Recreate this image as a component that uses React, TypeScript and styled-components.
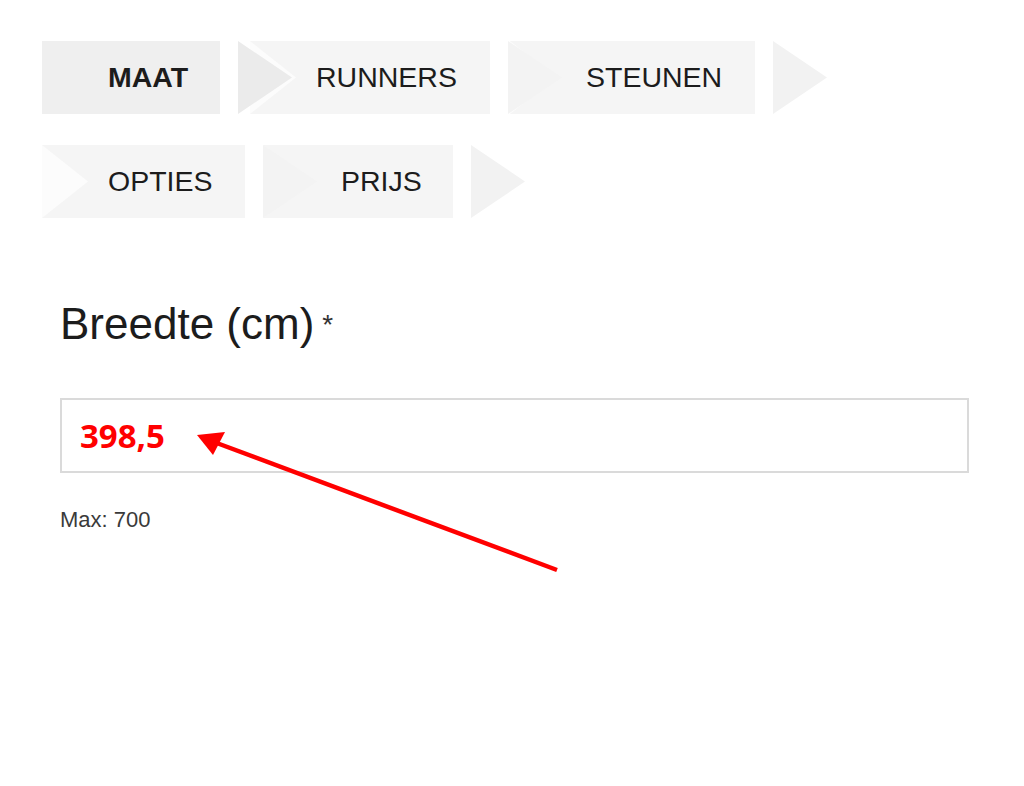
import React from "react";
import styled, { createGlobalStyle } from "styled-components";

const GlobalStyle = createGlobalStyle`
  html, body {
    margin: 0;
    padding: 0;
    background: #ffffff;
    font-family: "Liberation Sans", Arial, sans-serif;
  }
`;

const Page = styled.div`
  position: relative;
  width: 1024px;
  height: 786px;
  padding: 41px 0 0 42px;
  box-sizing: border-box;
  overflow: hidden;
`;

const Steps = styled.ol`
  list-style: none;
  margin: 0;
  padding: 0;
  width: 900px;
  display: flex;
  flex-wrap: wrap;
  row-gap: 31px;
`;

const Step = styled.li<{
  $width: number;
  $padLeft: number;
  $space: number;
  $active?: boolean;
  $notch?: boolean;
  $arrow: string;
}>`
  position: relative;
  box-sizing: border-box;
  width: ${(p) => p.$width}px;
  height: 73px;
  margin-right: ${(p) => p.$space}px;
  padding-left: ${(p) => p.$padLeft}px;
  display: flex;
  align-items: center;
  background: ${(p) => (p.$active ? "#efefef" : "#f5f5f5")};
  color: #1c1c1c;
  font-size: 28.5px;
  font-weight: ${(p) => (p.$active ? 700 : 400)};
  white-space: nowrap;

  &::before {
    content: "";
    display: ${(p) => (p.$notch ? "block" : "none")};
    position: absolute;
    left: 0;
    top: 0;
    width: 46px;
    height: 100%;
    background: #fcfcfc;
    clip-path: polygon(0 0, 100% 50%, 0 100%);
  }

  &::after {
    content: "";
    position: absolute;
    left: calc(100% + 18px);
    top: 0;
    width: 54px;
    height: 100%;
    background: ${(p) => p.$arrow};
    clip-path: polygon(0 0, 100% 50%, 0 100%);
    z-index: 1;
  }
`;

const Form = styled.div`
  margin-top: 80px;
  padding-left: 18px;
  width: 909px;
`;

const Label = styled.h2`
  margin: 0;
  font-size: 44px;
  font-weight: 400;
  line-height: 51px;
  color: #1c1c1c;
`;

const Required = styled.span`
  margin-left: 8px;
  font-size: 28px;
  color: #333333;
  vertical-align: 5px;
`;

const Field = styled.input`
  display: block;
  box-sizing: border-box;
  width: 909px;
  height: 75px;
  margin-top: 48px;
  padding: 0 0 0 18px;
  border: 2px solid #dadada;
  border-radius: 0;
  background: #ffffff;
  color: #ff0000;
  font-family: "Open Sans", "Liberation Sans", sans-serif;
  font-weight: 700;
  font-size: 33px;
  outline: none;
`;

const Hint = styled.div`
  margin-top: 34px;
  font-size: 22px;
  line-height: 25px;
  color: #3a3a3a;
`;

const Annotation = styled.svg`
  position: absolute;
  left: 0;
  top: 0;
  pointer-events: none;
`;

const steps = [
  { label: "MAAT", width: 178, padLeft: 66, space: 30, active: true, notch: false, arrow: "#ebebeb" },
  { label: "RUNNERS", width: 240, padLeft: 66, space: 20, notch: true, arrow: "#f3f3f3" },
  { label: "STEUNEN", width: 245, padLeft: 76, space: 20, notch: true, arrow: "#f2f2f2" },
  { label: "OPTIES", width: 203, padLeft: 66, space: 18, notch: true, arrow: "#f3f3f3" },
  { label: "PRIJS", width: 190, padLeft: 78, space: 18, notch: true, arrow: "#f2f2f2" },
];

export default function App() {
  return (
    <>
      <GlobalStyle />
      <Page>
        <Steps>
          {steps.map((s) => (
            <Step
              key={s.label}
              $width={s.width}
              $padLeft={s.padLeft}
              $space={s.space}
              $active={s.active}
              $notch={s.notch}
              $arrow={s.arrow}
            >
              {s.label}
            </Step>
          ))}
        </Steps>
        <Form>
          <Label>
            Breedte (cm)<Required>*</Required>
          </Label>
          <Field readOnly value="398,5" />
          <Hint>Max: 700</Hint>
        </Form>
        <Annotation width="1024" height="786" viewBox="0 0 1024 786">
          <line x1="557" y1="570" x2="214" y2="442" stroke="#ff0000" strokeWidth="4.5" />
          <polygon points="197,435 225,432 213,455" fill="#ff0000" />
        </Annotation>
      </Page>
    </>
  );
}
